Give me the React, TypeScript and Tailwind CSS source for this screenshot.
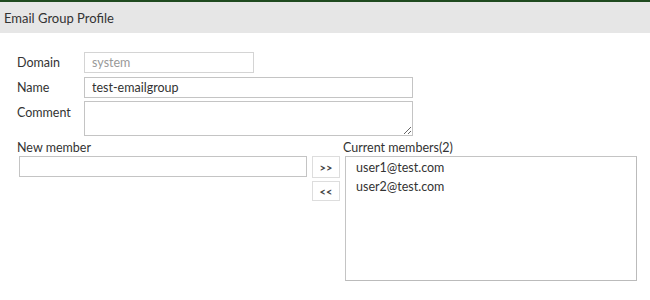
export default function App() {
  const members = ["user1@test.com", "user2@test.com"];

  return (
    <div className="w-[650px] h-[300px] bg-white font-['Lato',sans-serif] text-[12.5px] text-[#333] overflow-hidden">
      <div className="h-[33px] border-t-2 border-[#1f4a1f] bg-[#e6e6e6] px-[4px] pt-[2px] flex items-center text-[13px]">
        Email Group Profile
      </div>

      <div className="pl-[17px] pt-[19px]">
        <div className="flex items-center h-[21px]">
          <span className="w-[67px] pt-[1px]">Domain</span>
          <input
            disabled
            placeholder="system"
            className="w-[170px] h-[21px] border border-[#d4d4d4] bg-white px-[7px] text-[12.5px] text-[#999] placeholder:text-[#999] outline-none"
          />
        </div>
        <div className="flex items-center h-[21px] mt-[4px]">
          <span className="w-[67px] pt-[1px]">Name</span>
          <input
            defaultValue="test-emailgroup"
            className="w-[329px] h-[21px] border border-[#c4c4c4] bg-white px-[7px] text-[12.5px] text-[#333] outline-none"
          />
        </div>
        <div className="flex items-start mt-[3px] h-[35px]">
          <span className="w-[67px] pt-[3px]">Comment</span>
          <textarea className="w-[329px] h-[35px] border border-[#c4c4c4] bg-white px-[7px] text-[12.5px] outline-none block" />
        </div>

        <div className="flex mt-[4px]">
          <div className="flex flex-col">
            <span className="leading-[16px] h-[16px]">New member</span>
            <div className="flex gap-[5px]">
              <input className="ml-[2px] w-[288px] h-[21px] border border-[#c4c4c4] bg-white outline-none" />
              <div className="flex flex-col gap-[3px]">
                <button className="w-[28px] h-[22px] border border-[#ddd] bg-white text-[11px] font-bold leading-none text-[#444]">&gt;&gt;</button>
                <button className="w-[28px] h-[20px] border border-[#ddd] bg-white text-[11px] font-bold leading-none text-[#444]">&lt;&lt;</button>
              </div>
            </div>
          </div>
          <div className="flex flex-col ml-[3px]">
            <span className="leading-[16px] h-[16px]">Current members(2)</span>
            <div className="ml-[2px] w-[292px] h-[125px] border border-[#c4c4c4] border-r-[#bbb] border-b-[#bbb] bg-white pt-[1px] pl-[10px]">
              {members.map((m) => (
                <div key={m} className="leading-[19px]">{m}</div>
              ))}
            </div>
          </div>
        </div>
      </div>
    </div>
  );
}
